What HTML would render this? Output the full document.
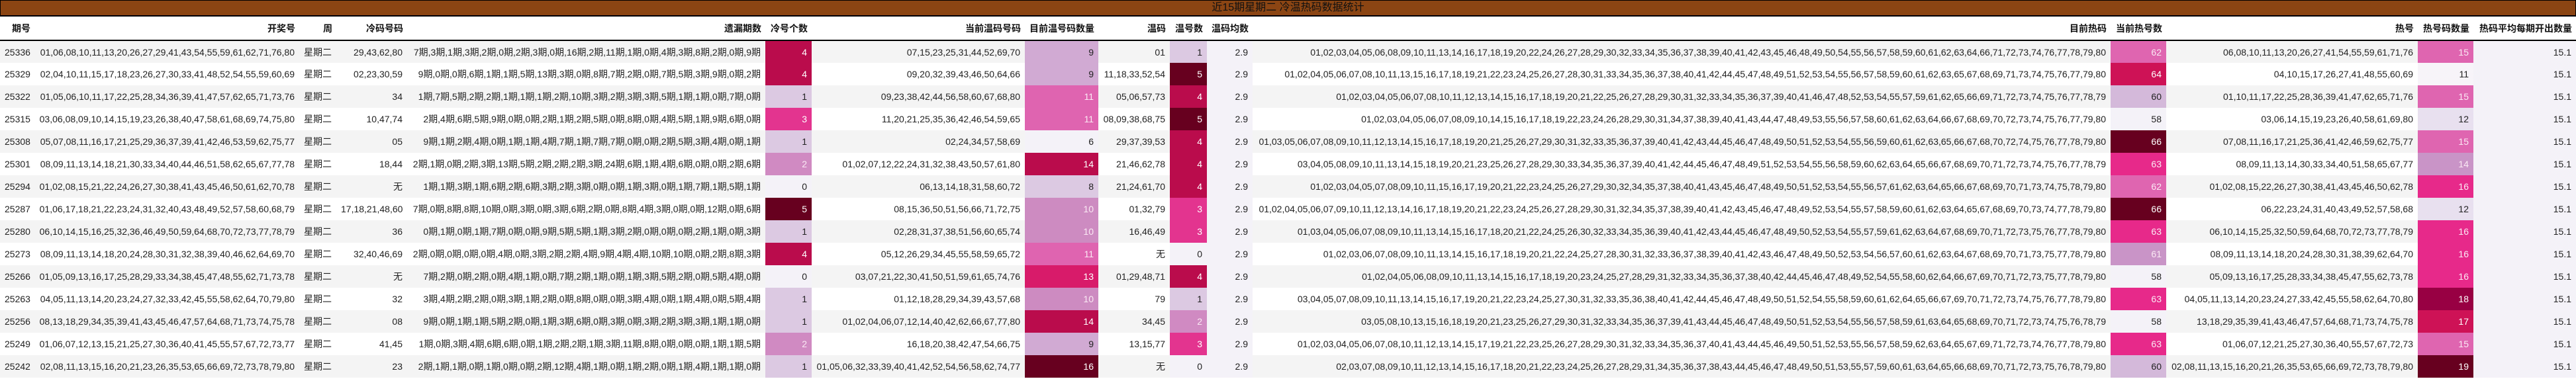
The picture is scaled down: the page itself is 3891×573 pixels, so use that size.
<!DOCTYPE html>
<html><head><meta charset="utf-8">
<style>
*{margin:0;padding:0;box-sizing:border-box}
body{width:3891px;height:573px;overflow:hidden;background:#fff;font-family:"Liberation Sans","Noto Sans CJK SC",sans-serif;font-size:14px;color:#222}
.title{height:25px;background:#8B4513;border:1px solid #000;border-bottom:2px solid #000;text-align:center;line-height:21px;color:#111;font-size:16px}
table{border-collapse:collapse;table-layout:fixed;width:3891px}
th{height:36px;font-weight:bold;text-align:right;padding:0 6px;border-bottom:2px solid #000;white-space:nowrap;color:#111}
td{height:34px;text-align:right;padding:0 7px;white-space:nowrap;overflow:hidden}
tbody tr:nth-child(odd) td{background:#f4f4f4}
tbody tr:nth-child(even) td{background:#fff}
tbody tr td.lv{background:#f4f2f8}
tbody tr td.a0{background:#f4f2f8;color:#222}
tbody tr td.a1{background:#dcc9e2;color:#222}
tbody tr td.a2{background:#d08ac2;color:#fbe9f4}
tbody tr td.a3{background:#e3348f;color:#fff}
tbody tr td.a4{background:#ba0c4c;color:#fff}
tbody tr td.a5{background:#67001f;color:#fff}
tbody tr td.w9{background:#d1aad3;color:#222}
tbody tr td.w10{background:#cd8bc1;color:#fbe9f4}
tbody tr td.w11{background:#df64b0;color:#fbe9f4}
tbody tr td.w13{background:#d81b6a;color:#fff}
tbody tr td.h60{background:#d4b9da;color:#222}
tbody tr td.h61{background:#c994c7;color:#fbe9f4}
tbody tr td.h62{background:#df65b0;color:#fbe9f4}
tbody tr td.h63{background:#e7298a;color:#fbe9f4}
tbody tr td.h64{background:#ce1256;color:#fff}
tbody tr td.n11{background:#f7f4f9;color:#222}
tbody tr td.n12{background:#e8e0ef;color:#222}
tbody tr td.n14{background:#c994c7;color:#fbe9f4}
tbody tr td.n15{background:#df65b0;color:#fbe9f4}
tbody tr td.n16{background:#e7298a;color:#fbe9f4}
tbody tr td.n17{background:#ce1256;color:#fff}
tbody tr td.n18{background:#980043;color:#fff}
tbody tr td.n19{background:#67001f;color:#fff}
</style></head><body>
<div class="title">近15期星期二 冷温热码数据统计</div>
<table>
<colgroup>
<col style="width:52px"><col style="width:400px"><col style="width:56px"><col style="width:107px"><col style="width:541px"><col style="width:70px"><col style="width:322px"><col style="width:111px"><col style="width:108px"><col style="width:56px"><col style="width:69px"><col style="width:1296px"><col style="width:84px"><col style="width:380px"><col style="width:84px"><col style="width:155px">
</colgroup>
<thead><tr><th>期号</th><th>开奖号</th><th>周</th><th>冷码号码</th><th>遗漏期数</th><th>冷号个数</th><th>当前温码号码</th><th>目前温号码数量</th><th>温码</th><th>温号数</th><th>温码均数</th><th>目前热码</th><th>当前热号数</th><th>热号</th><th>热号码数量</th><th>热码平均每期开出数量</th></tr></thead>
<tbody>
<tr><td>25336</td><td>01,06,08,10,11,13,20,26,27,29,41,43,54,55,59,61,62,71,76,80</td><td>星期二</td><td>29,43,62,80</td><td>7期,3期,1期,3期,2期,0期,2期,3期,0期,16期,2期,11期,1期,0期,4期,3期,8期,2期,0期,9期</td><td class="a4">4</td><td>07,15,23,25,31,44,52,69,70</td><td class="w9">9</td><td>01</td><td class="a1">1</td><td class="lv">2.9</td><td>01,02,03,04,05,06,08,09,10,11,13,14,16,17,18,19,20,22,24,26,27,28,29,30,32,33,34,35,36,37,38,39,40,41,42,43,45,46,48,49,50,54,55,56,57,58,59,60,61,62,63,64,66,71,72,73,74,76,77,78,79,80</td><td class="h62">62</td><td>06,08,10,11,13,20,26,27,41,54,55,59,61,71,76</td><td class="n15">15</td><td class="lv">15.1</td></tr>
<tr><td>25329</td><td>02,04,10,11,15,17,18,23,26,27,30,33,41,48,52,54,55,59,60,69</td><td>星期二</td><td>02,23,30,59</td><td>9期,0期,0期,6期,1期,1期,5期,13期,3期,0期,8期,7期,2期,0期,7期,5期,3期,9期,0期,2期</td><td class="a4">4</td><td>09,20,32,39,43,46,50,64,66</td><td class="w9">9</td><td>11,18,33,52,54</td><td class="a5">5</td><td class="lv">2.9</td><td>01,02,04,05,06,07,08,10,11,13,15,16,17,18,19,21,22,23,24,25,26,27,28,30,31,33,34,35,36,37,38,40,41,42,44,45,47,48,49,51,52,53,54,55,56,57,58,59,60,61,62,63,65,67,68,69,71,73,74,75,76,77,79,80</td><td class="h64">64</td><td>04,10,15,17,26,27,41,48,55,60,69</td><td class="n11">11</td><td class="lv">15.1</td></tr>
<tr><td>25322</td><td>01,05,06,10,11,17,22,25,28,34,36,39,41,47,57,62,65,71,73,76</td><td>星期二</td><td>34</td><td>1期,7期,5期,2期,2期,1期,1期,1期,2期,10期,3期,2期,3期,3期,5期,1期,1期,0期,7期,0期</td><td class="a1">1</td><td>09,23,38,42,44,56,58,60,67,68,80</td><td class="w11">11</td><td>05,06,57,73</td><td class="a4">4</td><td class="lv">2.9</td><td>01,02,03,04,05,06,07,08,10,11,12,13,14,15,16,17,18,19,20,21,22,25,26,27,28,29,30,31,32,33,34,35,36,37,39,40,41,46,47,48,52,53,54,55,57,59,61,62,65,66,69,71,72,73,74,75,76,77,78,79</td><td class="h60">60</td><td>01,10,11,17,22,25,28,36,39,41,47,62,65,71,76</td><td class="n15">15</td><td class="lv">15.1</td></tr>
<tr><td>25315</td><td>03,06,08,09,10,14,15,19,23,26,38,40,47,58,61,68,69,74,75,80</td><td>星期二</td><td>10,47,74</td><td>2期,4期,6期,5期,9期,0期,0期,2期,1期,2期,5期,0期,8期,0期,4期,5期,1期,9期,6期,0期</td><td class="a3">3</td><td>11,20,21,25,35,36,42,46,54,59,65</td><td class="w11">11</td><td>08,09,38,68,75</td><td class="a5">5</td><td class="lv">2.9</td><td>01,02,03,04,05,06,07,08,09,10,14,15,16,17,18,19,22,23,24,26,28,29,30,31,34,37,38,39,40,41,43,44,47,48,49,53,55,56,57,58,60,61,62,63,64,66,67,68,69,70,72,73,74,75,76,77,79,80</td><td class="a0">58</td><td>03,06,14,15,19,23,26,40,58,61,69,80</td><td class="n12">12</td><td class="lv">15.1</td></tr>
<tr><td>25308</td><td>05,07,08,11,16,17,21,25,29,36,37,39,41,42,46,53,59,62,75,77</td><td>星期二</td><td>05</td><td>9期,1期,2期,4期,0期,1期,1期,4期,7期,1期,7期,7期,0期,0期,2期,5期,3期,4期,0期,1期</td><td class="a1">1</td><td>02,24,34,57,58,69</td><td class="a0">6</td><td>29,37,39,53</td><td class="a4">4</td><td class="lv">2.9</td><td>01,03,05,06,07,08,09,10,11,12,13,14,15,16,17,18,19,20,21,25,26,27,29,30,31,32,33,35,36,37,39,40,41,42,43,44,45,46,47,48,49,50,51,52,53,54,55,56,59,60,61,62,63,65,66,67,68,70,72,74,75,76,77,78,79,80</td><td class="a5">66</td><td>07,08,11,16,17,21,25,36,41,42,46,59,62,75,77</td><td class="n15">15</td><td class="lv">15.1</td></tr>
<tr><td>25301</td><td>08,09,11,13,14,18,21,30,33,34,40,44,46,51,58,62,65,67,77,78</td><td>星期二</td><td>18,44</td><td>2期,1期,0期,2期,3期,13期,5期,2期,2期,2期,3期,24期,6期,1期,4期,6期,0期,0期,2期,6期</td><td class="a2">2</td><td>01,02,07,12,22,24,31,32,38,43,50,57,61,80</td><td class="a4">14</td><td>21,46,62,78</td><td class="a4">4</td><td class="lv">2.9</td><td>03,04,05,08,09,10,11,13,14,15,18,19,20,21,23,25,26,27,28,29,30,33,34,35,36,37,39,40,41,42,44,45,46,47,48,49,51,52,53,54,55,56,58,59,60,62,63,64,65,66,67,68,69,70,71,72,73,74,75,76,77,78,79</td><td class="h63">63</td><td>08,09,11,13,14,30,33,34,40,51,58,65,67,77</td><td class="n14">14</td><td class="lv">15.1</td></tr>
<tr><td>25294</td><td>01,02,08,15,21,22,24,26,27,30,38,41,43,45,46,50,61,62,70,78</td><td>星期二</td><td>无</td><td>1期,1期,3期,1期,6期,2期,6期,3期,2期,3期,0期,0期,1期,3期,0期,1期,7期,1期,5期,1期</td><td class="a0">0</td><td>06,13,14,18,31,58,60,72</td><td class="a1">8</td><td>21,24,61,70</td><td class="a4">4</td><td class="lv">2.9</td><td>01,02,03,04,05,07,08,09,10,11,15,16,17,19,20,21,22,23,24,25,26,27,29,30,32,34,35,37,38,40,41,43,45,46,47,48,49,50,51,52,53,54,55,56,57,61,62,63,64,65,66,67,68,69,70,71,73,74,75,78,79,80</td><td class="h62">62</td><td>01,02,08,15,22,26,27,30,38,41,43,45,46,50,62,78</td><td class="n16">16</td><td class="lv">15.1</td></tr>
<tr><td>25287</td><td>01,06,17,18,21,22,23,24,31,32,40,43,48,49,52,57,58,60,68,79</td><td>星期二</td><td>17,18,21,48,60</td><td>7期,0期,8期,8期,10期,0期,3期,0期,3期,6期,2期,0期,8期,4期,3期,0期,0期,12期,0期,6期</td><td class="a5">5</td><td>08,15,36,50,51,56,66,71,72,75</td><td class="w10">10</td><td>01,32,79</td><td class="a3">3</td><td class="lv">2.9</td><td>01,02,04,05,06,07,09,10,11,12,13,14,16,17,18,19,20,21,22,23,24,25,26,27,28,29,30,31,32,34,35,37,38,39,40,41,42,43,45,46,47,48,49,52,53,54,55,57,58,59,60,61,62,63,64,65,67,68,69,70,73,74,77,78,79,80</td><td class="a5">66</td><td>06,22,23,24,31,40,43,49,52,57,58,68</td><td class="n12">12</td><td class="lv">15.1</td></tr>
<tr><td>25280</td><td>06,10,14,15,16,25,32,36,46,49,50,59,64,68,70,72,73,77,78,79</td><td>星期二</td><td>36</td><td>0期,1期,0期,1期,7期,0期,0期,9期,5期,5期,1期,3期,2期,0期,0期,0期,2期,1期,0期,3期</td><td class="a1">1</td><td>02,28,31,37,38,51,56,60,65,74</td><td class="w10">10</td><td>16,46,49</td><td class="a3">3</td><td class="lv">2.9</td><td>01,03,04,05,06,07,08,09,10,11,13,14,15,16,17,18,20,21,22,24,25,26,30,32,33,34,35,36,39,40,41,42,43,44,45,46,47,48,49,50,52,53,54,55,57,59,61,62,63,64,67,68,69,70,71,72,73,75,76,77,78,79,80</td><td class="h63">63</td><td>06,10,14,15,25,32,50,59,64,68,70,72,73,77,78,79</td><td class="n16">16</td><td class="lv">15.1</td></tr>
<tr><td>25273</td><td>08,09,11,13,14,18,20,24,28,30,31,32,38,39,40,46,62,64,69,70</td><td>星期二</td><td>32,40,46,69</td><td>2期,0期,0期,0期,0期,4期,0期,3期,2期,2期,4期,9期,4期,4期,10期,10期,0期,2期,8期,3期</td><td class="a4">4</td><td>05,12,26,29,34,45,55,58,59,65,72</td><td class="w11">11</td><td>无</td><td class="a0">0</td><td class="lv">2.9</td><td>01,02,03,06,07,08,09,10,11,13,14,15,16,17,18,19,20,21,22,24,25,27,28,30,31,32,33,36,37,38,39,40,41,42,43,46,47,48,49,50,52,53,54,56,57,60,61,62,63,64,67,68,69,70,71,73,75,77,78,79,80</td><td class="h61">61</td><td>08,09,11,13,14,18,20,24,28,30,31,38,39,62,64,70</td><td class="n16">16</td><td class="lv">15.1</td></tr>
<tr><td>25266</td><td>01,05,09,13,16,17,25,28,29,33,34,38,45,47,48,55,62,71,73,78</td><td>星期二</td><td>无</td><td>7期,2期,0期,2期,0期,4期,1期,0期,7期,2期,1期,0期,1期,3期,5期,2期,0期,5期,4期,0期</td><td class="a0">0</td><td>03,07,21,22,30,41,50,51,59,61,65,74,76</td><td class="w13">13</td><td>01,29,48,71</td><td class="a4">4</td><td class="lv">2.9</td><td>01,02,04,05,06,08,09,10,11,13,14,15,16,17,18,19,20,23,24,25,27,28,29,31,32,33,34,35,36,37,38,40,42,44,45,46,47,48,49,52,54,55,58,60,62,64,66,67,69,70,71,72,73,75,77,78,79,80</td><td class="a0">58</td><td>05,09,13,16,17,25,28,33,34,38,45,47,55,62,73,78</td><td class="n16">16</td><td class="lv">15.1</td></tr>
<tr><td>25263</td><td>04,05,11,13,14,20,23,24,27,32,33,42,45,55,58,62,64,70,79,80</td><td>星期二</td><td>32</td><td>3期,4期,2期,2期,0期,3期,1期,2期,0期,8期,0期,0期,3期,4期,0期,1期,4期,0期,5期,4期</td><td class="a1">1</td><td>01,12,18,28,29,34,39,43,57,68</td><td class="w10">10</td><td>79</td><td class="a1">1</td><td class="lv">2.9</td><td>03,04,05,07,08,09,10,11,13,14,15,16,17,19,20,21,22,23,24,25,27,30,31,32,33,35,36,38,40,41,42,44,45,46,47,48,49,50,51,52,54,55,58,59,60,61,62,64,65,66,67,69,70,71,72,73,74,75,76,77,78,79,80</td><td class="h63">63</td><td>04,05,11,13,14,20,23,24,27,33,42,45,55,58,62,64,70,80</td><td class="n18">18</td><td class="lv">15.1</td></tr>
<tr><td>25256</td><td>08,13,18,29,34,35,39,41,43,45,46,47,57,64,68,71,73,74,75,78</td><td>星期二</td><td>08</td><td>9期,0期,1期,1期,5期,2期,0期,1期,3期,6期,0期,3期,0期,3期,2期,3期,3期,1期,1期,0期</td><td class="a1">1</td><td>01,02,04,06,07,12,14,40,42,62,66,67,77,80</td><td class="a4">14</td><td>34,45</td><td class="a2">2</td><td class="lv">2.9</td><td>03,05,08,10,13,15,16,18,19,20,21,23,25,26,27,29,30,31,32,33,34,35,36,37,39,41,43,44,45,46,47,48,49,50,51,52,53,54,55,56,57,58,59,61,63,64,65,68,69,70,71,72,73,74,75,76,78,79</td><td class="a0">58</td><td>13,18,29,35,39,41,43,46,47,57,64,68,71,73,74,75,78</td><td class="n17">17</td><td class="lv">15.1</td></tr>
<tr><td>25249</td><td>01,06,07,12,13,15,21,25,27,30,36,40,41,45,55,57,67,72,73,77</td><td>星期二</td><td>41,45</td><td>1期,0期,3期,4期,6期,6期,0期,1期,2期,2期,1期,3期,11期,8期,0期,0期,0期,1期,1期,5期</td><td class="a2">2</td><td>16,18,20,38,42,47,54,66,75</td><td class="w9">9</td><td>13,15,77</td><td class="a3">3</td><td class="lv">2.9</td><td>01,02,03,04,05,06,07,08,10,11,12,13,14,15,17,19,21,22,23,25,26,27,28,29,30,31,32,33,34,35,36,37,40,41,43,44,45,46,49,50,51,52,53,55,56,57,58,59,62,63,64,65,67,69,71,72,73,74,76,77,78,79,80</td><td class="h63">63</td><td>01,06,07,12,21,25,27,30,36,40,55,57,67,72,73</td><td class="n15">15</td><td class="lv">15.1</td></tr>
<tr><td>25242</td><td>02,08,11,13,15,16,20,21,23,26,35,53,65,66,69,72,73,78,79,80</td><td>星期二</td><td>23</td><td>2期,1期,1期,0期,1期,0期,0期,2期,12期,4期,1期,0期,1期,2期,0期,1期,4期,1期,1期,0期</td><td class="a1">1</td><td>01,05,06,32,33,39,40,41,42,52,54,56,58,62,74,77</td><td class="a5">16</td><td>无</td><td class="a0">0</td><td class="lv">2.9</td><td>02,03,07,08,09,10,11,12,13,14,15,16,17,18,20,21,22,23,24,25,26,27,28,29,31,34,35,36,37,38,43,44,45,46,47,48,49,50,51,53,55,57,59,60,61,63,64,65,66,68,69,70,71,72,73,75,76,78,79,80</td><td class="h60">60</td><td>02,08,11,13,15,16,20,21,26,35,53,65,66,69,72,73,78,79,80</td><td class="n19">19</td><td class="lv">15.1</td></tr>
</tbody></table>
</body></html>
